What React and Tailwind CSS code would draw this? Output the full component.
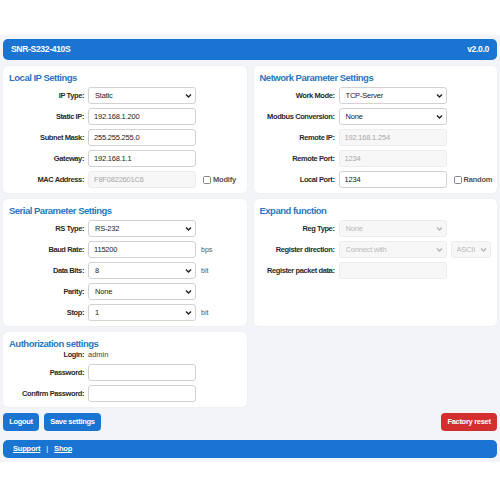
import React from 'react';

const FONT = { fontFamily: '"Liberation Sans", Arial, sans-serif' };

const Chevron = ({ muted }) => (
  <svg
    className="absolute right-[4px] top-1/2 -translate-y-1/2 pointer-events-none"
    width="7"
    height="5"
    viewBox="0 0 7 5"
  >
    <path
      d="M1 1l2.5 2.5L6 1"
      fill="none"
      stroke={muted ? '#b5b5b5' : '#222'}
      strokeWidth="1.4"
    />
  </svg>
);

const Select = ({ value, disabled, width = 'w-[108px]', pad = 'pl-[6px]' }) => (
  <div className={`relative h-[17px] shrink-0 ${width}`}>
    <select
      disabled={disabled}
      defaultValue={value}
      className={`appearance-none block w-full h-full rounded-[3px] border pr-[4px] text-[7.5px] leading-[15px] tracking-[-0.2px] outline-none ${pad} ${
        disabled
          ? 'bg-[#f7f7f7] border-[#ececec] text-[#b9b9b9]'
          : 'bg-white border-[#d2d2d2] text-[#222]'
      }`}
    >
      <option>{value}</option>
    </select>
    <Chevron muted={disabled} />
  </div>
);

const Input = ({ value = '', disabled, type = 'text' }) => (
  <input
    type={type}
    readOnly
    disabled={disabled}
    defaultValue={value}
    className={`block shrink-0 w-[108px] h-[17px] rounded-[3px] border px-[5px] text-[7.5px] tracking-[-0.2px] outline-none ${
      disabled
        ? 'bg-[#f7f7f7] border-[#ececec] text-[#a8a8a8]'
        : 'bg-white border-[#d2d2d2] text-[#222]'
    }`}
  />
);

const Row = ({ label, children, extra, short }) => (
  <div
    className={`flex items-center gap-[4px] ${
      short ? 'h-[10px] -mt-[3px]' : 'h-[17px]'
    }`}
  >
    <span className="w-[75px] shrink-0 text-right text-[7.5px] leading-[10px] tracking-[-0.4px] font-bold text-[#2a2a2a] whitespace-nowrap">
      {label}
    </span>
    {children}
    {extra}
  </div>
);

const Check = ({ label }) => (
  <label className="flex items-center gap-[2px] ml-[3px] text-[7.5px] leading-[10px] tracking-[-0.2px] font-bold text-[#555] whitespace-nowrap">
    <span className="w-[8px] h-[8px] border border-[#888] rounded-[1.5px] bg-white" />
    {label}
  </label>
);

const Unit = ({ children }) => (
  <span className="ml-[1px] text-[7px] leading-[10px] text-[#555]">{children}</span>
);

const Panel = ({ title, children }) => (
  <div className="bg-white rounded-[5px] shadow-[0_0_2px_rgba(0,0,0,0.06)] px-[6px] pt-[4px] pb-[5px]">
    <h2 className="h-[16px] leading-[16px] mb-[1px] text-[9.5px] tracking-[-0.5px] font-bold text-[#2a78be]">
      {title}
    </h2>
    <div className="flex flex-col gap-[4px]">{children}</div>
  </div>
);

const btn =
  'h-[18px] rounded-[4px] text-white text-[7.5px] tracking-[-0.3px] font-bold';

export default function App() {
  return (
    <div className="bg-white pt-[35px] min-h-[500px]" style={FONT}>
      <div className="bg-[#f2f4f7] px-[3px] pt-[4px] pb-[4px]">
        {/* Шапка */}
        <header className="h-[21px] rounded-[5px] bg-[#1a74d2] flex items-center justify-between px-[8px] text-white text-[8.5px] tracking-[-0.3px] font-bold">
          <span>SNR-S232-410S</span>
          <span>v2.0.0</span>
        </header>

        <div className="grid grid-cols-2 gap-x-[7px] gap-y-[6px] mt-[6px]">
          <Panel title="Local IP Settings">
            <Row label="IP Type:">
              <Select value="Static" />
            </Row>
            <Row label="Static IP:">
              <Input value="192.168.1.200" />
            </Row>
            <Row label="Subnet Mask:">
              <Input value="255.255.255.0" />
            </Row>
            <Row label="Gateway:">
              <Input value="192.168.1.1" />
            </Row>
            <Row label="MAC Address:" extra={<Check label="Modify" />}>
              <Input value="F8F0822601C6" disabled />
            </Row>
          </Panel>

          <Panel title="Network Parameter Settings">
            <Row label="Work Mode:">
              <Select value="TCP-Server" />
            </Row>
            <Row label="Modbus Conversion:">
              <Select value="None" />
            </Row>
            <Row label="Remote IP:">
              <Input value="192.168.1.254" disabled />
            </Row>
            <Row label="Remote Port:">
              <Input value="1234" disabled />
            </Row>
            <Row label="Local Port:" extra={<Check label="Random" />}>
              <Input value="1234" />
            </Row>
          </Panel>

          <Panel title="Serial Parameter Settings">
            <Row label="RS Type:">
              <Select value="RS-232" />
            </Row>
            <Row label="Baud Rate:" extra={<Unit>bps</Unit>}>
              <Input value="115200" />
            </Row>
            <Row label="Data Bits:" extra={<Unit>bit</Unit>}>
              <Select value="8" />
            </Row>
            <Row label="Parity:">
              <Select value="None" />
            </Row>
            <Row label="Stop:" extra={<Unit>bit</Unit>}>
              <Select value="1" />
            </Row>
          </Panel>

          <Panel title="Expand function">
            <Row label="Reg Type:">
              <Select value="None" disabled />
            </Row>
            <Row
              label="Register direction:"
              extra={<Select value="ASCII" disabled width="w-[40px]" pad="pl-[5px]" />}
            >
              <Select value="Connect with" disabled />
            </Row>
            <Row label="Register packet data:">
              <Input disabled />
            </Row>
          </Panel>

          <Panel title="Authorization settings">
            <Row label="Login:" short>
              <span className="text-[7.5px] leading-[10px] text-[#444]">admin</span>
            </Row>
            <Row label="Password:">
              <Input type="password" />
            </Row>
            <Row label="Confirm Password:">
              <Input type="password" />
            </Row>
          </Panel>
        </div>

        <div className="flex items-center justify-between mt-[6px]">
          <div className="flex gap-[5px]">
            <button className={`${btn} w-[36px] bg-[#1a74d2]`}>Logout</button>
            <button className={`${btn} w-[57px] bg-[#1a74d2]`}>Save settings</button>
          </div>
          <button className={`${btn} w-[56px] bg-[#d32f2f]`}>Factory reset</button>
        </div>

        <footer className="mt-[9px] h-[18px] rounded-[5px] bg-[#1a74d2] flex items-center gap-[6px] px-[10px] text-white text-[7.5px] tracking-[-0.2px] font-bold">
          <a className="underline">Support</a>
          <span className="font-normal">|</span>
          <a className="underline">Shop</a>
        </footer>
      </div>
    </div>
  );
}
